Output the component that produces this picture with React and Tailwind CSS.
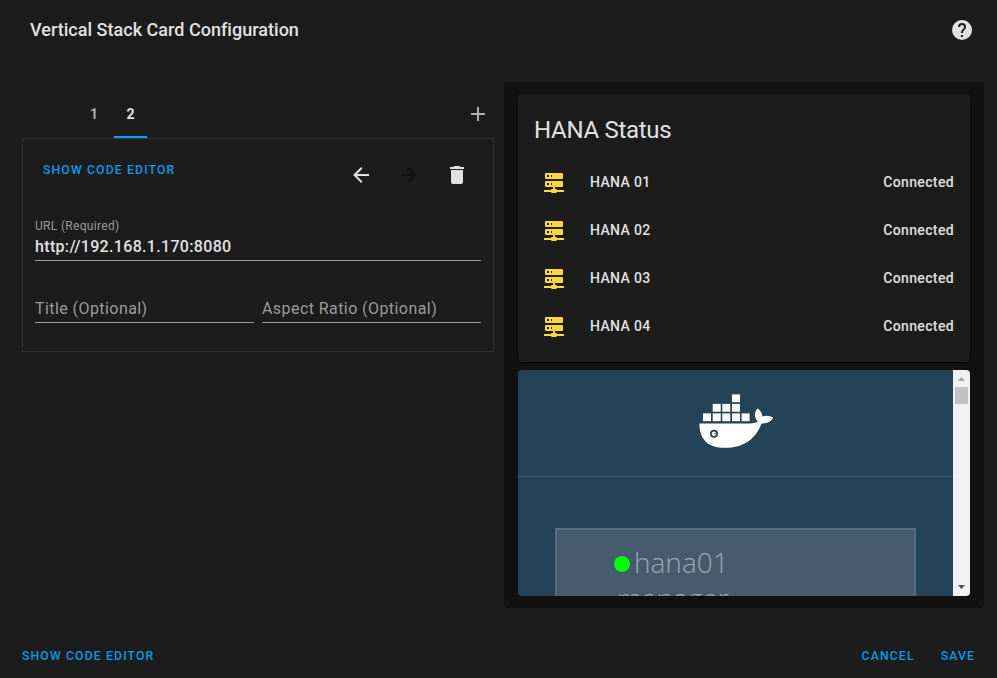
const MDI = {
  help: "M15.07,11.25L14.17,12.17C13.45,12.89 13,13.5 13,15H11V14.5C11,13.39 11.45,12.39 12.17,11.67L13.41,10.41C13.78,10.05 14,9.55 14,9C14,7.89 13.1,7 12,7A2,2 0 0,0 10,9H8A4,4 0 0,1 12,5A4,4 0 0,1 16,9C16,9.88 15.64,10.67 15.07,11.25M13,19H11V17H13M12,2A10,10 0 0,0 2,12A10,10 0 0,0 12,22A10,10 0 0,0 22,12C22,6.47 17.5,2 12,2Z",
  plus: "M19,13H13V19H11V13H5V11H11V5H13V11H19V13Z",
  left: "M20,11V13H8L13.5,18.5L12.08,19.92L4.16,12L12.08,4.08L13.5,5.5L8,11H20Z",
  right: "M4,11V13H16L10.5,18.5L11.92,19.92L19.84,12L11.92,4.08L10.5,5.5L16,11H4Z",
  trash: "M19,4H15.5L14.5,3H9.5L8.5,4H5V6H19M6,19A2,2 0 0,0 8,21H16A2,2 0 0,0 18,19V7H6V19Z",
  server: "M13,19H14A1,1 0 0,1 15,20H22V22H15A1,1 0 0,1 14,23H10A1,1 0 0,1 9,22H2V20H9A1,1 0 0,1 10,19H11V17H4A1,1 0 0,1 3,16V12A1,1 0 0,1 4,11H20A1,1 0 0,1 21,12V16A1,1 0 0,1 20,17H13V19M4,3H20A1,1 0 0,1 21,4V8A1,1 0 0,1 20,9H4A1,1 0 0,1 3,8V4A1,1 0 0,1 4,3M9,7H10V5H9V7M9,15H10V13H9V15M5,5V7H7V5H5M5,13V15H7V13H5Z",
};

function Icon({ name, className = "" }) {
  return (
    <svg viewBox="0 0 24 24" className={`size-6 shrink-0 fill-current ${className}`}>
      <path d={MDI[name]} />
    </svg>
  );
}

function TextButton({ children }) {
  return (
    <button className="text-[12.25px] leading-4 font-medium tracking-[1.12px] whitespace-nowrap text-[#039be5] uppercase">
      {children}
    </button>
  );
}

// Crates are stacked from the bottom row up.
const CRATES = [
  [4, 19], [13.7, 19], [23.3, 19], [33, 19], [42.6, 19],
  [13.7, 9.5], [23.3, 9.5], [33, 9.5],
  [33, 0],
];

function DockerWhale() {
  return (
    <svg width="76" height="56" viewBox="0 0 76 56" className="fill-white">
      {CRATES.map(([x, y]) => (
        <rect key={`${x}-${y}`} x={x} y={y + 0.4} width="8" height="7.8" />
      ))}
      <path d="M.4 29.4H51c3 0 5.6-.5 7.8-1.6C55.2 23.4 54.8 18.6 58.6 14.5c3.3 2.3 4.7 5 4.7 7.9 3.8-1.3 7.5-.6 10.7 1.2-2 4.5-6.3 6.2-11.5 5.8C56.8 44.5 45.5 53.7 26 53.7 8.5 53.7.4 44.8.4 29.4Z" />
      <circle cx="15" cy="39.8" r="3.100" className="fill-white stroke-[#254356]" strokeWidth="1.700" />
      <path d="M15 39.8l1.700-1.300v2z" className="fill-[#254356]" />
    </svg>
  );
}

function Entity({ name }) {
  return (
    <div className="flex h-12 items-center">
      <div className="flex size-10 items-center justify-center text-[#fdd835]">
        <Icon name="server" />
      </div>
      <span className="ml-4 flex-1">{name}</span>
      <span>Connected</span>
    </div>
  );
}

export default function App() {
  return (
    <div className="flex h-[678px] w-[997px] flex-col overflow-hidden bg-[#1c1c1c] font-[Roboto,sans-serif] text-[#e1e1e1]">
      <header className="flex h-[60px] items-center justify-between pr-[23px] pl-[30px]">
        <h1 className="pb-0.5 text-[18px] font-medium tracking-[0.02px] whitespace-nowrap">Vertical Stack Card Configuration</h1>
        <Icon name="help" />
      </header>

      <main className="flex pt-[22px] pl-[22px]">
        <section className="w-[472px] pt-2">
          <div className="flex h-12 items-center pr-1 pl-14 text-sm font-bold">
            <span className="w-8 text-center text-[#b0b0b0]">1</span>
            <span className="ml-1 flex h-12 w-[33px] items-center justify-center border-b-2 border-[#03a9f4] pt-0.5">2</span>
            <Icon name="plus" className="ml-auto text-[#b0b0b0]" />
          </div>
          <div className="h-[214px] border border-[#333] px-3 pt-3">
            <div className="flex h-12 justify-between pr-3 pl-2">
              <div className="flex items-start pt-[11px]"><TextButton>Show code editor</TextButton></div>
              <div className="flex items-center gap-6">
                <Icon name="left" />
                <Icon name="right" className="text-[#111]" />
                <Icon name="trash" />
              </div>
            </div>
            <div className="mt-[19px] h-[43px] border-b border-[#9b9b9b]">
              <div className="text-xs leading-4 tracking-[0.32px] text-[#9b9b9b]">URL (Required)</div>
              <div className="text-base leading-[26px] font-medium tracking-[0.33px]">http://192.168.1.170:8080</div>
            </div>
            <div className="flex gap-2 pt-[34px] text-base leading-7 tracking-[0.43px] text-[#9b9b9b]">
              <div className="h-7 flex-1 border-b border-[#9b9b9b]">Title (Optional)</div>
              <div className="h-7 flex-1 border-b border-[#9b9b9b]">Aspect Ratio (Optional)</div>
            </div>
          </div>
        </section>

        <section className="ml-2.5 flex h-[526px] w-[480px] flex-col gap-2 rounded-[4px] bg-[#111] px-3.5 py-3">
          <div className="h-[268px] rounded-[4px] bg-[#1c1c1c] px-4 shadow-[0_1px_2px_#000]">
            <h2 className="h-16 pt-4 text-2xl leading-10 tracking-[-0.288px]">HANA Status</h2>
            <div className="text-sm font-medium tracking-[0.36px]">
              <Entity name="HANA 01" />
              <Entity name="HANA 02" />
              <Entity name="HANA 03" />
              <Entity name="HANA 04" />
            </div>
          </div>
          <div className="flex h-[226px] overflow-hidden rounded-[4px] bg-[#254356]">
            <div className="flex-1">
              <div className="flex h-[107px] justify-center border-b border-[#415b70] pt-6 pl-0.5">
                <DockerWhale />
              </div>
              <div className="mx-[37px] mt-[51px] h-[200px] border-2 border-[#536f84] bg-[#465b6e] pt-3.5 pl-[57px] font-['Open_Sans',sans-serif] text-[28px] leading-9 font-light text-[#9ba7b2]">
                <div className="flex items-center">
                  <span className="mt-1 mr-1 size-4 rounded-full bg-[#00ff00]" />
                  <span>hana01</span>
                </div>
                <div className="pl-[3px]">manager</div>
              </div>
            </div>
            <div className="flex w-[17px] flex-col items-center bg-[#f1f1f1]">
              <svg width="17" height="17" viewBox="0 0 17 17" className="shrink-0 fill-[#a3a3a3]">
                <path d="M5 11 8.500 7 12 11z" />
              </svg>
              <div className="h-[17px] w-[13px] shrink-0 bg-[#c1c1c1]" />
              <svg width="17" height="17" viewBox="0 0 17 17" className="mt-auto shrink-0 fill-[#505050]">
                <path d="M5 6H12L8.500 10z" />
              </svg>
            </div>
          </div>
        </section>
      </main>

      <footer className="mt-[40px] flex h-4 items-center pr-[22px] pl-[22px]">
        <TextButton>Show code editor</TextButton>
        <div className="ml-auto flex gap-[26px]">
          <TextButton>Cancel</TextButton>
          <TextButton>Save</TextButton>
        </div>
      </footer>
    </div>
  );
}
